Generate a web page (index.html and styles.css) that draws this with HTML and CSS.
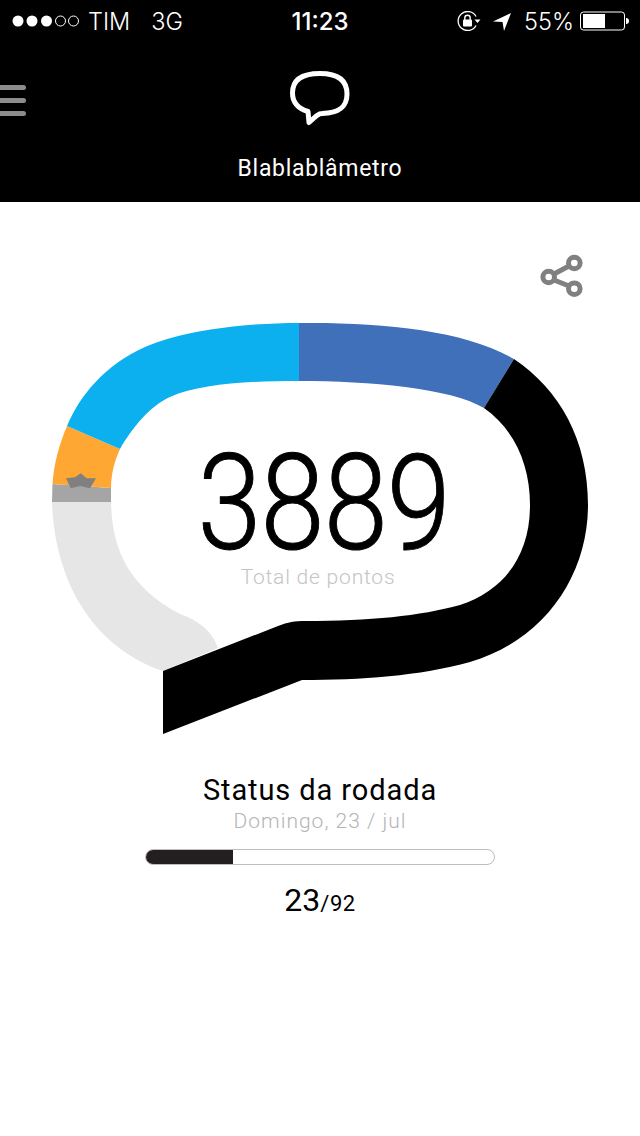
FILE: index.html
```html
<!DOCTYPE html>
<html lang="en">
<head>
<meta charset="UTF-8">
<title>Blablablâmetro</title>
<link rel="stylesheet" href="styles.css">
</head>
<body>
<header class="topBar">
  <div class="statusBar">
    <div class="statusLeft">
      <svg class="signal" width="68" height="14" viewBox="0 0 68 14">
        <circle cx="6" cy="7" r="5.5" fill="#fff"/>
        <circle cx="20" cy="7" r="5.5" fill="#fff"/>
        <circle cx="34.5" cy="7" r="5.5" fill="#fff"/>
        <circle cx="48.5" cy="7" r="5" fill="none" stroke="#fff"/>
        <circle cx="61.5" cy="7" r="5" fill="none" stroke="#fff"/>
      </svg>
      <span class="carrier">TIM</span>
      <span class="network">3G</span>
    </div>
    <div class="clock">11:23</div>
    <div class="statusRight">
      <svg width="24" height="20" viewBox="0 0 24 20">
        <path d="M19 14.5A9.5 9.5 0 1 1 19 5.5" fill="none" stroke="#fff" stroke-width="1.3"/>
        <path d="M17.5 8.5h6l-3 3.5z" fill="#fff"/>
        <rect x="6" y="8.5" width="9" height="7" rx="1" fill="#fff"/>
        <path d="M7.8 9V7a2.7 2.7 0 0 1 5.4 0v2" fill="none" stroke="#fff" stroke-width="1.4"/>
      </svg>
      <svg class="arrow" width="18" height="19" viewBox="0 0 18 19">
        <path d="M18 1L0 9.5l9.5 0.5 1.5 9z" fill="#fff"/>
      </svg>
      <span class="percent">55%</span>
      <svg width="49" height="20" viewBox="0 0 49 20">
        <rect x="0.5" y="1" width="44" height="18" rx="3" fill="none" stroke="#fff"/>
        <rect x="3" y="3" width="22" height="14" fill="#fff"/>
        <path d="M46 7c2 0 3 1 3 3s-1 3-3 3z" fill="#fff"/>
      </svg>
    </div>
  </div>
  <nav class="navRow">
    <div class="menuIcon"><span></span><span></span><span></span></div>
    <svg class="logo" width="60" height="56" viewBox="290 71 60 56">
      <path d="M320 73.5C338 73.5 347 80 347 94C347 108 338 113 322 113.500C319 113.500 317 115 309 122.500L308 111.500C298 108.500 292.500 103 292.500 93C292.500 80 302 73.500 320 73.500Z" fill="none" stroke="#fff" stroke-width="5" stroke-linejoin="round"/>
    </svg>
    <h1 class="pageTitle">Blablablâmetro</h1>
  </nav>
</header>

<main>
  <section class="gauge">
    <svg class="gaugeArt" width="640" height="540" viewBox="0 202 640 540">
      <!-- share -->
      <g fill="none" stroke="#808080" stroke-width="5">
        <path d="M554 274L569 266M554 280L569 286"/>
        <circle cx="574.300" cy="263" r="5.800"/>
        <circle cx="548.700" cy="277" r="5.800"/>
        <circle cx="574.300" cy="288.700" r="5.800"/>
      </g>
      <!-- balloon pieces -->
      <path fill="#e6e6e6" d="M52 502L111 502C112 545 125 585 180 614C197 620 212 630 218 648L163 671C100 650 55 590 52 502Z"/>
      <path fill="#a5a5a5" d="M52.500 484L111 488L111 502L52 502Z"/>
      <path fill="#ffa733" d="M67 426L120 449C114 462 111 475 111 488L52.500 484C54 463 59 445 67 426Z"/>
      <path fill="#0db0ee" d="M299 323L299 381C245 381 200 384 170 397C150 406 132 428 120 449L67 426C80 395 105 365 145 347C185 330 245 323 299 323Z"/>
      <path fill="#4070ba" d="M299 323C380 322 465 330 514 359L484 408C450 388 370 381 299 381Z"/>
      <path fill="#000" d="M514 359C560 390 588 440 588 505C588 575 545 640 470 662C420 676 360 680 302 680L163 734L163 671L278 626C288 622 295 621 305 621C370 621 420 616 460 605C505 590 530 555 530 505C530 465 515 430 484 408Z"/>
      <path fill="#808080" d="M66 478.300L75 477.300L80.700 473.300L86.700 478.300L96 478.300L90 488.300L80 486L70.700 488.300Z"/>
    </svg>
    <div class="score">
      <div class="scoreValue">3889</div>
      <div class="scoreLabel">Total de pontos</div>
    </div>
  </section>

  <section class="round">
    <h2 class="roundTitle">Status da rodada</h2>
    <div class="roundDate">Domingo, 23 / jul</div>
    <div class="progress"><div class="progressFill" style="width: 25%"></div></div>
    <div class="roundCount">23<small>/92</small></div>
  </section>
</main>
</body>
</html>
```

FILE: styles.css
```css
body { margin: 0; background: #fff; color: #000; font-family: Roboto, "Liberation Sans", sans-serif; }
.topBar { background: #000; color: #fff; height: 202px; }
.statusBar { display: grid; grid-template-columns: 1fr auto 1fr; align-items: center; height: 42px; font-family: Inter, "Liberation Sans", sans-serif; font-size: 23.5px; font-weight: 300; }
.statusLeft { display: flex; align-items: center; padding-left: 12px; }
.carrier { margin-left: 8px; }
.network { margin-left: 21px; }
.clock { font-weight: 500; font-size: 24px; }
.statusRight { display: flex; align-items: center; justify-content: flex-end; padding-right: 11px; }
.arrow { margin-left: 12px; }
.percent { margin-left: 13px; margin-right: 6px; }
.navRow { position: relative; display: flex; flex-direction: column; align-items: center; padding-top: 29px; }
.menuIcon { position: absolute; left: 0; top: 43px; display: flex; flex-direction: column; gap: 8px; }
.menuIcon span { display: block; width: 26px; height: 5px; background: #8c8c8c; border-radius: 0 3px 3px 0; }
.logo { display: block; }
.pageTitle { margin: 28px 0 0; font-size: 23px; font-weight: 400; line-height: 28px; letter-spacing: 0.7px; }
.gauge { position: relative; height: 540px; }
.gaugeArt { display: block; }
.score { position: absolute; left: 0; right: 0; top: 247px; display: flex; flex-direction: column; align-items: center; }
.scoreValue { margin-left: 7px; font-size: 134px; font-weight: 300; line-height: 110px; letter-spacing: -1px; transform: scaleX(0.86); -webkit-text-stroke: 1px #000; }
.scoreLabel { margin-top: 5px; margin-right: 4px; font-size: 21px; font-weight: 300; line-height: 26px; color: #c4c4c4; letter-spacing: 0.8px; }
.round { display: flex; flex-direction: column; align-items: center; margin-top: 30px; }
.roundTitle { margin: 0; font-size: 29px; font-weight: 400; line-height: 36px; letter-spacing: 0.9px; }
.roundDate { font-size: 21px; font-weight: 300; line-height: 26px; color: #b5b5b5; letter-spacing: 1px; }
.progress { box-sizing: border-box; width: 350px; height: 16px; margin-top: 15px; border: 1px solid #bdbdbd; border-radius: 8px; overflow: hidden; }
.progressFill { height: 100%; background: #231f20; }
.roundCount { margin-top: 16px; font-size: 32px; line-height: 38px; font-weight: 400; }
.roundCount small { font-size: 22px; letter-spacing: 0.5px; }
```
